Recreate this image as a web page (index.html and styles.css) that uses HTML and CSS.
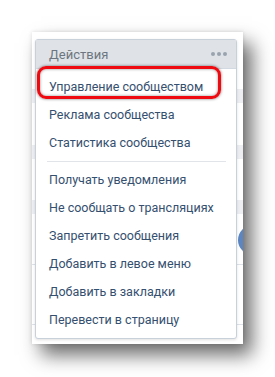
FILE: index.html
```html
<!DOCTYPE html>
<html lang="ru">
<head>
<meta charset="utf-8">
<link rel="stylesheet" href="styles.css">
</head>
<body>
<div class="shot">
  <div class="page">
    <div class="gap g1"></div>
    <div class="band"></div>
    <div class="gap g2"></div>
    <div class="band"></div>
    <div class="gap g3"></div>
    <div class="band"></div>
    <div class="gap g4"></div>
    <div class="avatar-row"><div class="avatar"></div></div>
    <div class="gap g5"></div>
    <div class="line"></div>
    <div class="gap g6"></div>
    <div class="line"></div>
  </div>
  <div class="menu">
    <div class="menu-head">
      <span class="head-title">Действия</span>
      <span class="dots"><i></i><i></i><i></i></span>
    </div>
    <div class="menu-body">
      <div class="item">Управление сообществом</div>
      <div class="item">Реклама сообщества</div>
      <div class="item">Статистика сообщества</div>
      <div class="sep"></div>
      <div class="item">Получать уведомления</div>
      <div class="item">Не сообщать о трансляциях</div>
      <div class="item">Запретить сообщения</div>
      <div class="item">Добавить в левое меню</div>
      <div class="item">Добавить в закладки</div>
      <div class="item">Перевести в страницу</div>
    </div>
    <div class="highlight"></div>
  </div>
</div>
</body>
</html>
```

FILE: styles.css
```css
html, body {
  margin: 0;
  padding: 0;
  background: #ffffff;
}
body {
  font-family: Roboto, "Open Sans", "DejaVu Sans", sans-serif;
  width: 275px;
  height: 377px;
  overflow: hidden;
}
.shot {
  position: relative;
  margin: 32px 0 0 32px;
  width: 211px;
  height: 312px;
  background: #ffffff;
  box-shadow: 9px 11px 18px rgba(0, 0, 0, 0.58), 0 0 4px rgba(0, 0, 0, 0.12);
  overflow: hidden;
}
.page {
  display: flex;
  flex-direction: column;
}
.gap { flex: none; }
.g1 { height: 57px; }
.g2 { height: 42px; }
.g3 { height: 41px; }
.g4 { height: 13px; }
.g5 { height: 12px; }
.g6 { height: 59px; }
.band {
  height: 14px;
  background: #eceef1;
  flex: none;
}
.line {
  height: 1px;
  background: #dfe2e6;
  flex: none;
}
.avatar-row {
  height: 25px;
  position: relative;
  flex: none;
}
.avatar {
  position: absolute;
  left: 206px;
  top: -2px;
  width: 30px;
  height: 30px;
  border-radius: 50%;
  background: #5b86c2;
}
.menu {
  position: absolute;
  left: 3px;
  top: 7px;
  width: 200px;
  background: #ffffff;
  border: 1px solid #c8d0da;
  border-radius: 3px;
  box-shadow: 0 1px 3px rgba(0, 0, 0, 0.12);
}
.menu-head {
  height: 28px;
  background: #dfe3e8;
  display: flex;
  align-items: center;
  justify-content: space-between;
  padding: 0 9px 0 13px;
  border-bottom: 1px solid #d3d9e0;
}
.head-title {
  font-size: 13px;
  color: #6d7680;
}
.dots {
  display: flex;
  gap: 2px;
}
.dots i {
  display: block;
  width: 4px;
  height: 4px;
  border-radius: 50%;
  background: #99a3ae;
}
.menu-body {
  padding: 4px 0 4px;
}
.item {
  height: 28px;
  line-height: 28px;
  padding-left: 13px;
  font-size: 12.5px;
  color: #35506f;
  white-space: nowrap;
}
.sep {
  height: 1px;
  background: #e1e4e8;
  margin: 4px 10px 4px 11px;
}
.highlight {
  position: absolute;
  left: 1px;
  top: 26px;
  width: 178px;
  height: 27px;
  border: 3px solid #ee0a10;
  border-radius: 9px;
  box-shadow: 0 0 3px rgba(0, 0, 0, 0.55), inset 0 0 3px rgba(0, 0, 0, 0.45);
}
```
